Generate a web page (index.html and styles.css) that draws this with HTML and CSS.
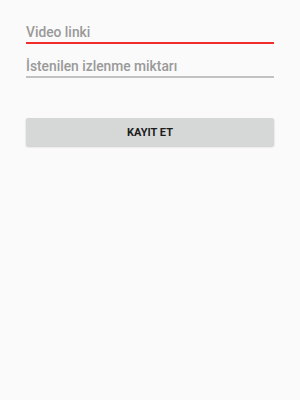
FILE: index.html
```html
<!DOCTYPE html>
<html lang="tr">
<head>
    <meta charset="UTF-8">
    <meta name="viewport" content="width=device-width, initial-scale=1.0">
    <title>Kayıt</title>
    <link rel="stylesheet" href="styles.css">
</head>
<body>
    <div class="container">
        <form class="form">
            <div class="field field-active">
                <input type="text" placeholder="Video linki">
            </div>
            <div class="field">
                <input type="text" placeholder="İstenilen izlenme miktarı">
            </div>
            <button type="button" class="save-btn">KAYIT ET</button>
        </form>
    </div>
</body>
</html>
```

FILE: styles.css
```css
body {
    margin: 0;
    background-color: #fafafa;
    font-family: Roboto, 'Noto Sans', sans-serif;
}

.container {
    padding: 22px 26px;
}

.form {
    display: flex;
    flex-direction: column;
}

.field {
    border-bottom: 2px solid #c2c2c2;
    margin-bottom: 12px;
}

.field-active {
    border-bottom-color: #f02c2c;
}

.field input {
    display: block;
    width: 100%;
    height: 20px;
    box-sizing: border-box;
    border: none;
    background: transparent;
    outline: none;
    padding: 0;
    font-family: Roboto, 'Noto Sans', sans-serif;
    font-size: 13.8px;
    font-weight: 500;
    line-height: 20px;
    color: #333;
}

.field input::placeholder {
    color: #999;
}

.save-btn {
    margin-top: 28px;
    height: 28px;
    border: none;
    border-radius: 2px;
    background-color: #d6d7d7;
    color: #1c1c1c;
    font-family: Roboto, 'Noto Sans', sans-serif;
    font-size: 11px;
    font-weight: bold;
    box-shadow: 0 1px 2px rgba(0, 0, 0, 0.2);
    cursor: pointer;
}
```
